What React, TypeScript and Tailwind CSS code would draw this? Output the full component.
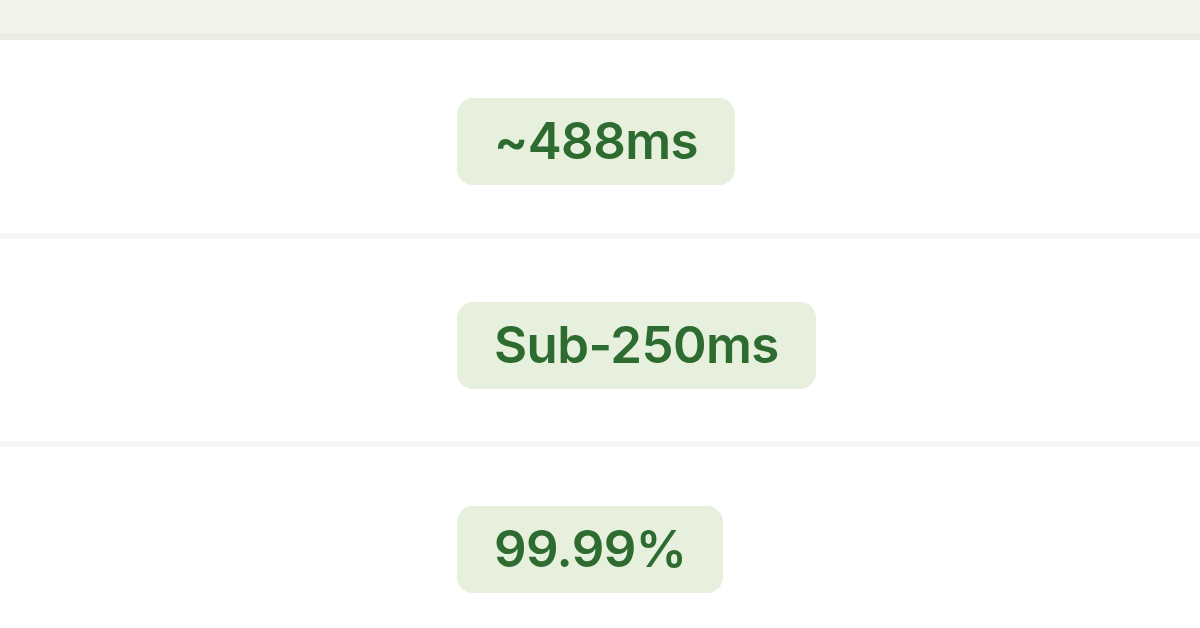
const rows = ["~488ms", "Sub-250ms", "99.99%"];
const pads = ["pt-[58px] pb-[48px]", "pt-[63px] pb-[52px]", "pt-[59px] pb-[52px]"];

export default function App() {
  return (
    <div className="w-[1200px] h-[628px] overflow-hidden bg-white font-['Inter','Liberation_Sans',sans-serif]">
      <div className="h-[40px] bg-[#f3f2eb] border-b-[7px] border-[#edece5]" />
      {rows.map((value, i) => (
        <div
          key={value}
          className={`grid grid-cols-[457px_1fr] border-b-[6px] border-[#f6f6f6] ${pads[i]}`}
        >
          <div />
          <div className="flex">
            <span className="h-[87px] flex items-center px-[37px] rounded-[16px] bg-[#e6f0dc] text-[#2e6b30] text-[51px] font-semibold tracking-[-0.6px]">
              {value}
            </span>
          </div>
        </div>
      ))}
    </div>
  );
}
